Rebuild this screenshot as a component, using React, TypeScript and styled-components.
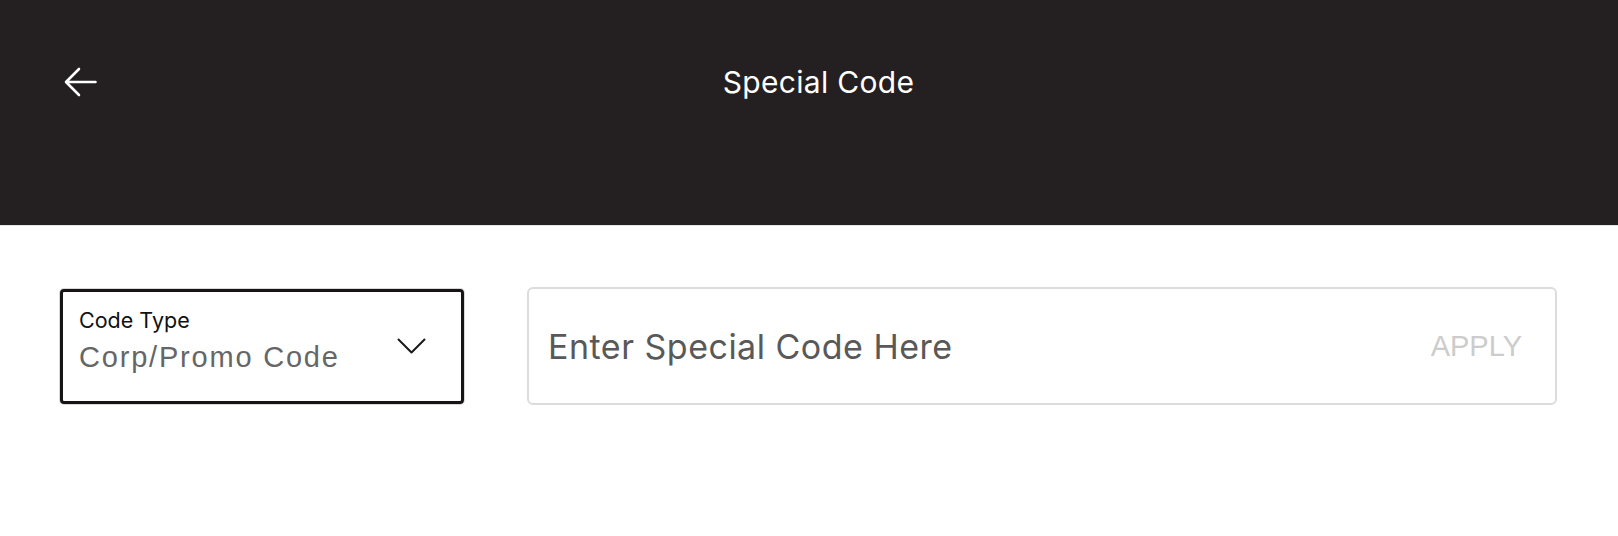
import React from "react"
import styled, { createGlobalStyle } from "styled-components"

const GlobalStyle = createGlobalStyle`
	body {
		margin: 0;
		background: #ffffff;
		font-family: Inter, "Liberation Sans", sans-serif;
	}
`

const SPage = styled.div`
	display: flex;
	flex-direction: column;
	width: 100%;
	min-height: 536px;
	background: #ffffff;
`

const SHeader = styled.header`
	display: flex;
	flex-direction: column;
	height: 226px;
	background-color: #242021;
	border-bottom: 1px solid #e6e6e6;
	box-sizing: border-box;
`

const STopRow = styled.div`
	display: grid;
	grid-template-columns: 1fr auto 1fr;
	align-items: center;
	height: 164px;
	padding: 0 64px;
`

const SBackButton = styled.button`
	display: flex;
	justify-self: start;
	align-items: center;
	padding: 0;
	border: none;
	background: none;
	cursor: pointer;
`

const STitle = styled.h1`
	margin: 0 0 0 19px;
	font-family: Inter, "Liberation Sans", sans-serif;
	font-size: 30px;
	font-weight: 400;
	color: #ffffff;
	letter-spacing: 0.3px;
`

const SContents = styled.div`
	display: flex;
	align-items: center;
	gap: 63px;
	padding: 61px 61px 0 60px;
`

const SSelect = styled.div`
	display: flex;
	align-items: center;
	justify-content: space-between;
	width: 404px;
	height: 115px;
	box-sizing: border-box;
	border: 3px solid #161415;
	border-radius: 4px;
	box-shadow: 0 0 0 1px #d8d8d8;
	padding: 0 35px 0 16px;
	cursor: pointer;
`

const SSelectText = styled.div`
	display: flex;
	flex-direction: column;
	margin-top: -10px;
`

const SLabel = styled.span`
	font-family: Inter, "Liberation Sans", sans-serif;
	font-size: 21.5px;
	line-height: 25px;
	margin-bottom: 7px;
	color: #111111;
`

const SValue = styled.span`
	font-family: "Liberation Sans", Arial, sans-serif;
	font-size: 29px;
	line-height: 34px;
	letter-spacing: 1.8px;
	color: #666666;
`

const SInputBox = styled.div`
	display: flex;
	flex: 1;
	align-items: center;
	height: 118px;
	box-sizing: border-box;
	border: 2px solid #dcdcdc;
	border-radius: 6px;
	padding: 0 33px 0 19px;
`

const SInput = styled.input`
	flex: 1;
	border: none;
	outline: none;
	background: transparent;
	font-family: Inter, "Liberation Sans", sans-serif;
	font-size: 34px;
	letter-spacing: 0.5px;
	color: #555555;
	padding: 0;
	&::placeholder {
		color: #595959;
	}
`

const SApply = styled.button`
	border: none;
	background: none;
	padding: 0;
	font-family: "Liberation Sans", Arial, sans-serif;
	font-size: 29px;
	color: #cccccc;
	cursor: pointer;
`

export default function App() {
	return (
		<SPage>
			<GlobalStyle />
			<SHeader>
				<STopRow>
					<SBackButton aria-label="back">
						<svg width="33" height="30" viewBox="0 0 33 30" fill="none">
							<path d="M31.5 15H2.5M15 2L2 15l13 13" stroke="#ffffff" strokeWidth="2.6" strokeLinecap="round" strokeLinejoin="round" />
						</svg>
					</SBackButton>
					<STitle>Special Code</STitle>
					<div />
				</STopRow>
			</SHeader>
			<SContents>
				<SSelect>
					<SSelectText>
						<SLabel>Code Type</SLabel>
						<SValue>Corp/Promo Code</SValue>
					</SSelectText>
					<svg width="29" height="17" viewBox="0 0 29 17" fill="none">
						<path d="M1.5 1.5L14.5 14.5L27.5 1.5" stroke="#1a1a1a" strokeWidth="2" strokeLinecap="round" strokeLinejoin="round" />
					</svg>
				</SSelect>
				<SInputBox>
					<SInput placeholder="Enter Special Code Here" />
					<SApply>APPLY</SApply>
				</SInputBox>
			</SContents>
		</SPage>
	)
}
